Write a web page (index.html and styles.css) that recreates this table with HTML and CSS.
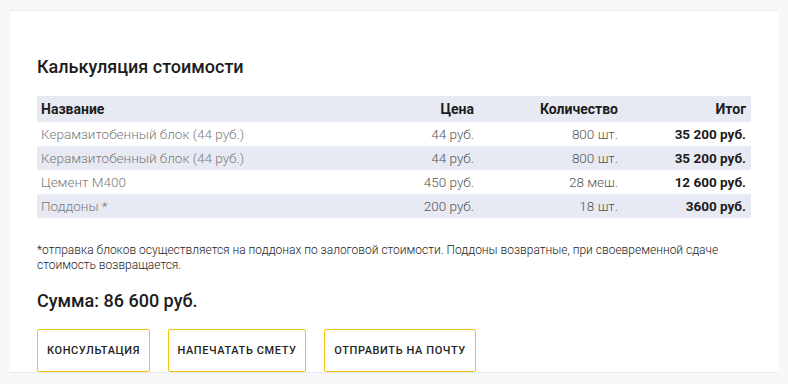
FILE: index.html
```html
<!DOCTYPE html>
<html lang="ru">
<head>
<meta charset="utf-8">
<link rel="stylesheet" href="styles.css">
</head>
<body>
<div class="page">
  <section class="card">
    <h2 class="title">Калькуляция стоимости</h2>
    <table class="calc">
      <thead>
        <tr><th class="c-name">Название</th><th class="c-price">Цена</th><th class="c-qty">Количество</th><th class="c-total">Итог</th></tr>
      </thead>
      <tbody>
        <tr><td class="c-name">Керамзитобенный блок (44 руб.)</td><td class="c-price">44 руб.</td><td class="c-qty">800 шт.</td><td class="c-total">35 200 руб.</td></tr>
        <tr class="alt"><td class="c-name">Керамзитобенный блок (44 руб.)</td><td class="c-price">44 руб.</td><td class="c-qty">800 шт.</td><td class="c-total">35 200 руб.</td></tr>
        <tr><td class="c-name">Цемент М400</td><td class="c-price">450 руб.</td><td class="c-qty">28 меш.</td><td class="c-total">12 600 руб.</td></tr>
        <tr class="alt"><td class="c-name">Поддоны *</td><td class="c-price">200 руб.</td><td class="c-qty">18 шт.</td><td class="c-total">3600 руб.</td></tr>
      </tbody>
    </table>
    <p class="note">*отправка блоков осуществляется на поддонах по залоговой стоимости. Поддоны возвратные, при своевременной сдаче стоимость возвращается.</p>
    <div class="sum">Сумма: 86 600 руб.</div>
    <div class="actions">
      <button class="btn btn-consult">Консультация</button>
      <button class="btn btn-print">Напечатать смету</button>
      <button class="btn btn-mail">Отправить на почту</button>
    </div>
  </section>
</div>
</body>
</html>
```
FILE: styles.css
```css
html, body {
  margin: 0;
  padding: 0;
  background: #f7f8fa;
  font-family: Roboto, "Noto Sans", sans-serif;
}
.page {
  padding: 10px 10px 0 10px;
}
.card {
  background: #fff;
  border-top: 1px solid #e8eaf3;
  border-bottom: 1px solid #e8eaf3;
  padding: 44px 27px 0 27px;
}
.title {
  margin: 0;
  font-size: 18px;
  font-weight: 500;
  color: #1c1c1c;
  line-height: 24px;
}
.calc {
  margin-top: 17px;
  width: 100%;
  border-collapse: collapse;
  font-size: 14px;
}
.calc th {
  background: #e8eaf3;
  font-weight: 700;
  color: #1c1c1c;
  height: 26px;
  padding: 0 5px 0 4px;
  line-height: 26px;
}
.calc tbody tr {
  height: 24px;
}
.calc td {
  height: 24px;
  padding: 0 5px 0 4px;
  line-height: 24px;
  font-size: 13.5px;
  font-weight: 300;
  color: #555;
  vertical-align: middle;
}
.calc tr.alt td {
  background: #e8eaf3;
}
.calc .c-name { text-align: left; color: #7a7a7a; }
.calc th.c-name { color: #1c1c1c; }
.calc .c-price, .calc .c-qty, .calc .c-total { text-align: right; }
.calc td.c-total { font-weight: 700; color: #1c1c1c; }
.calc .c-price { width: 140px; }
.calc .c-qty { width: 135px; }
.calc .c-total { width: 119px; }
.note {
  margin: 25px 0 0 0;
  font-size: 12px;
  line-height: 15px;
  font-weight: 300;
  color: #222;
}
.sum {
  margin-top: 16px;
  font-size: 18px;
  font-weight: 500;
  color: #1c1c1c;
  line-height: 24px;
}
.actions {
  display: flex;
  gap: 18px;
  margin-top: 16px;
}
.btn {
  font-family: Roboto, "Noto Sans", sans-serif;
  background: #fff;
  border: 1px solid #f4c20d;
  border-radius: 2px;
  height: 43px;
  padding: 0;
  font-size: 11px;
  font-weight: 500;
  letter-spacing: 0.6px;
  text-transform: uppercase;
  color: #222;
  text-align: center;
}
.btn-consult { width: 113px; }
.btn-print { width: 138px; }
.btn-mail { width: 152px; }
```
